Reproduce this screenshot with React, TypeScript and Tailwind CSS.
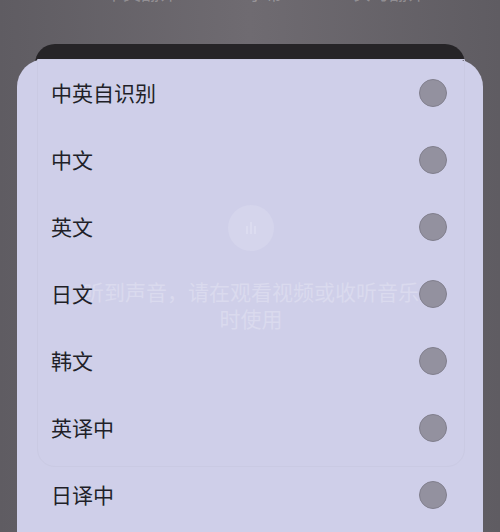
import React from "react";

const modes = ["中英自识别", "中文", "英文", "日文", "韩文", "英译中", "日译中"];

export default function App() {
  return (
    <div
      className="relative w-[500px] h-[532px] overflow-hidden bg-gradient-to-r from-[#5f5c62] via-[#6f6b71] to-[#5f5c62]"
      style={{ fontFamily: '"Noto Sans CJK SC", "Noto Sans", sans-serif' }}
    >
      {/* cut-off line of the screen behind */}
      <div className="h-0 flex justify-center gap-[70px] text-[18px] leading-[20px] text-white/30 -translate-y-[18px] pl-[30px]">
        <span>中英翻译</span>
        <span>字幕</span>
        <span>实时翻译</span>
      </div>

      <div className="mt-[44px] mx-[35px] h-[30px] rounded-t-[20px] bg-[#262427]" />

      <div className="relative -mt-[15px] mx-[17px] h-[480px] rounded-t-[28px] bg-[#cfcfe9]">
        {/* faint card content showing through */}
        <div className="absolute left-[20px] right-[18px] top-0 bottom-[72px] rounded-b-[18px] border border-[#cacae3] pointer-events-none">
          <div className="absolute left-[190px] top-[145px] w-[46px] h-[46px] rounded-full bg-[#d5d5ec] flex items-center justify-center">
            <div className="flex items-end gap-[2px]">
              <span className="w-[2px] h-[8px] bg-[#dcdcf0]" />
              <span className="w-[2px] h-[12px] bg-[#dcdcf0]" />
              <span className="w-[2px] h-[8px] bg-[#dcdcf0]" />
            </div>
          </div>
          <div className="absolute left-0 right-0 top-[218px] text-center text-[21px] leading-[27px] text-[#dadaee]">
            听到声音，请在观看视频或收听音乐
            <br />
            时使用
          </div>
        </div>

        <div className="relative flex flex-col">
          {modes.map((m) => (
            <div key={m} className="h-[67px] flex items-center justify-between pl-[34px] pr-[36px]">
              <span className="text-[21px] text-[#211f28]">{m}</span>
              <span className="w-[28px] h-[28px] rounded-full bg-[#93919f] border border-[#817f8d]" />
            </div>
          ))}
        </div>
      </div>
    </div>
  );
}
